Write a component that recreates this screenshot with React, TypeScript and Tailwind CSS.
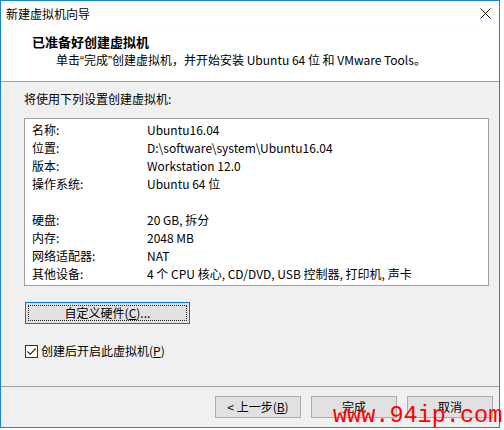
import React from 'react';

const rows: [string, string][] = [
  ['名称:', 'Ubuntu16.04'],
  ['位置:', 'D:\\software\\system\\Ubuntu16.04'],
  ['版本:', 'Workstation 12.0'],
  ['操作系统:', 'Ubuntu 64 位'],
  ['', ''],
  ['硬盘:', '20 GB, 拆分'],
  ['内存:', '2048 MB'],
  ['网络适配器:', 'NAT'],
  ['其他设备:', '4 个 CPU 核心, CD/DVD, USB 控制器, 打印机, 声卡'],
];

function WinButton({ children }: { children: React.ReactNode }) {
  return (
    <button className="w-[86px] h-[22px] bg-[#e1e1e1] border border-[#adadad] flex items-center justify-center text-[12px] leading-none text-black">
      {children}
    </button>
  );
}

// narrow quote marks, like the Latin ones the dialog font uses
function Q({ c }: { c: string }) {
  return <span style={{ fontFamily: '"Liberation Sans", sans-serif' }}>{c}</span>;
}

export default function App() {
  return (
    <div className="relative w-[504px] h-[430px] bg-white" style={{ fontFamily: '"Noto Sans CJK SC", "Noto Sans", sans-serif' }}>
      <div className="w-[500px] h-[428px] border border-[#1883d7] bg-[#f0f0f0] flex flex-col text-[12px] text-black">
        {/* title bar */}
        <div className="h-[25px] bg-white flex items-center justify-between pl-[5px] pr-[8px]">
          <span className="leading-[18px]">新建虚拟机向导</span>
          <svg width="11" height="11" viewBox="0 0 11 11" className="mb-[1px]">
            <path d="M0.5 0.5 L10.5 10.5 M10.5 0.5 L0.5 10.5" stroke="#111" strokeWidth="1" />
          </svg>
        </div>

        {/* header */}
        <div className="h-[56px] bg-white border-b border-[#a0a0a0] pt-[7px]">
          <div className="pl-[31px] leading-[18px] text-[13px] font-bold">已准备好创建虚拟机</div>
          <div className="pl-[55px] leading-[18px]">
            单击<Q c="“" />完成<Q c="”" />创建虚拟机，并开始安装 Ubuntu 64 位 和 VMware Tools。
          </div>
        </div>

        {/* body */}
        <div className="flex-1 flex flex-col pl-[23px] pt-[8px]">
          <div className="leading-[18px]">将使用下列设置创建虚拟机:</div>
          <div className="mt-[10px] w-[465px] h-[168px] bg-white border border-[#a0a0a0] pt-[2px] pl-[7px]">
            {rows.map(([label, value], i) => (
              <div key={i} className="flex h-[18px] leading-[18px]">
                <span className="w-[115px] shrink-0">{label}</span>
                <span>{value}</span>
              </div>
            ))}
          </div>
          <button className="mt-[16px] ml-[1px] w-[165px] h-[22px] bg-[#e1e1e1] border border-[#0078d7] p-[2px]">
            <span className="w-full h-full flex items-center justify-center border border-dotted border-[#222] text-[12px] leading-none">
              自定义硬件(<span className="underline">C</span>)...
            </span>
          </button>
          <label className="mt-[18px] flex items-center h-[18px] leading-[18px]">
            <span className="w-[13px] h-[13px] border border-[#333] bg-white flex items-center justify-center mr-[3px] ml-[1px]">
              <svg width="11" height="11" viewBox="0 0 11 11">
                <path d="M1.5 5.5 L4.2 8.3 L9.6 2.5" fill="none" stroke="#333" strokeWidth="1.2" />
              </svg>
            </span>
            创建后开启此虚拟机(<span className="underline">P</span>)
          </label>
        </div>

        {/* footer */}
        <div className="h-[41px] border-t border-[#a0a0a0] flex justify-end gap-[10px] pt-[9px] pr-[6px]">
          <WinButton>
            &lt; 上一步(<span className="underline">B</span>)
          </WinButton>
          <WinButton>完成</WinButton>
          <WinButton>取消</WinButton>
        </div>
      </div>

      {/* watermark */}
      <div
        className="absolute left-[333px] top-[404px] text-[23.5px] leading-none text-[#ff0000] whitespace-nowrap"
        style={{ fontFamily: '"Liberation Mono", monospace' }}
      >
        www.94ip.com
      </div>
    </div>
  );
}
